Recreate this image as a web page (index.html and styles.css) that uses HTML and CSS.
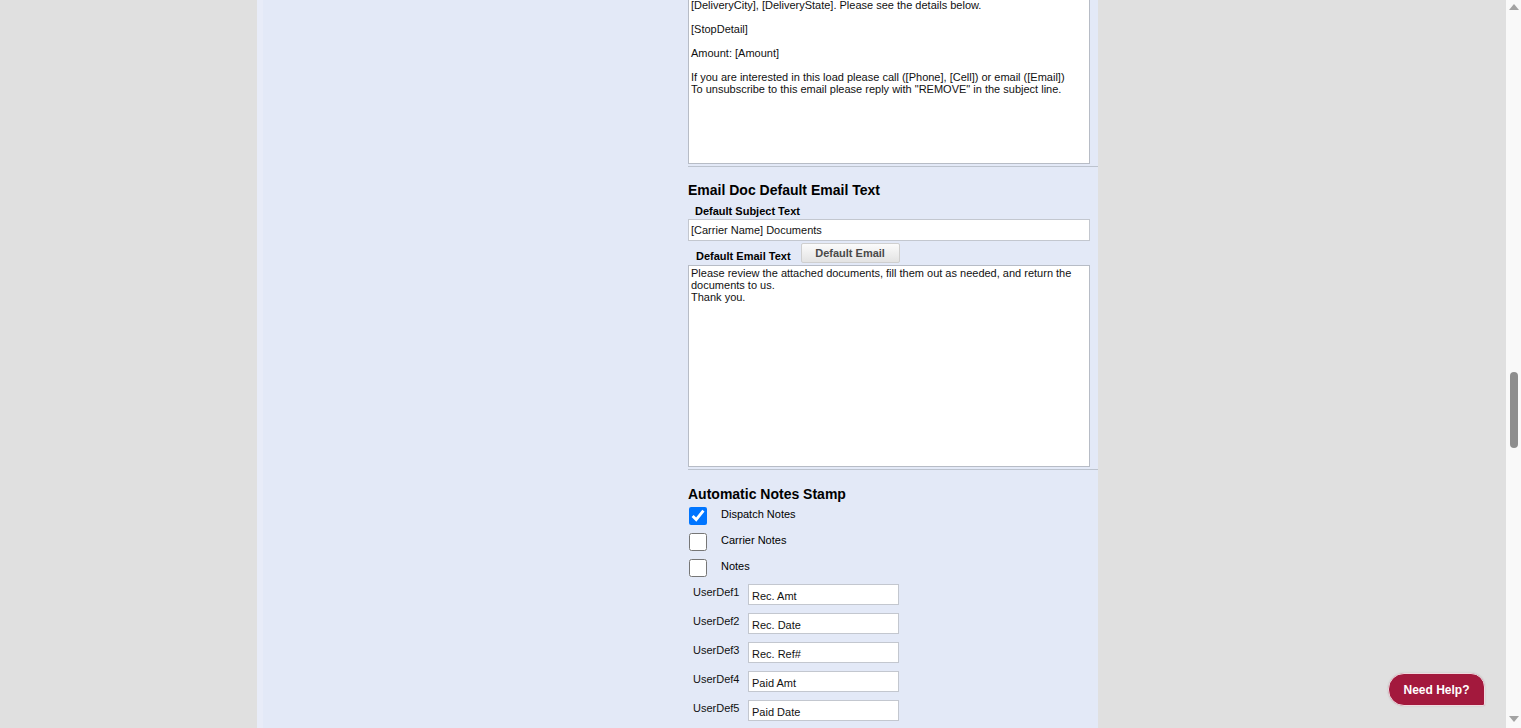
FILE: index.html
```html
<!DOCTYPE html>
<html>
<head>
<meta charset="utf-8">
<link rel="stylesheet" href="styles.css">
</head>
<body>
<div class="window">
  <div class="viewport">
    <div class="panel">
      <div class="content">
        <textarea class="area area-top">[CarrierName] has a load picking up in [PickupCity], [PickupState] delivering to
[DeliveryCity], [DeliveryState]. Please see the details below.

[StopDetail]

Amount: [Amount]

If you are interested in this load please call ([Phone], [Cell]) or email ([Email])
To unsubscribe to this email please reply with "REMOVE" in the subject line.</textarea>
        <div class="divider"></div>

        <h2 class="section-title">Email Doc Default Email Text</h2>
        <div class="field-label">Default Subject Text</div>
        <input class="text-input wide" type="text" value="[Carrier Name] Documents">
        <div class="label-row">
          <span class="field-label inline">Default Email Text</span>
          <button class="btn">Default Email</button>
        </div>
        <textarea class="area area-doc">Please review the attached documents, fill them out as needed, and return the documents to us.
Thank you.</textarea>
        <div class="divider"></div>

        <h2 class="section-title stamp-title">Automatic Notes Stamp</h2>
        <div class="checks">
          <label class="check-row"><input type="checkbox" checked><span>Dispatch Notes</span></label>
          <label class="check-row"><input type="checkbox"><span>Carrier Notes</span></label>
          <label class="check-row"><input type="checkbox"><span>Notes</span></label>
        </div>
        <div class="userdefs">
          <div class="ud-row"><span class="ud-label">UserDef1</span><input class="text-input ud" type="text" value="Rec. Amt"></div>
          <div class="ud-row"><span class="ud-label">UserDef2</span><input class="text-input ud" type="text" value="Rec. Date"></div>
          <div class="ud-row"><span class="ud-label">UserDef3</span><input class="text-input ud" type="text" value="Rec. Ref#"></div>
          <div class="ud-row"><span class="ud-label">UserDef4</span><input class="text-input ud" type="text" value="Paid Amt"></div>
          <div class="ud-row"><span class="ud-label">UserDef5</span><input class="text-input ud" type="text" value="Paid Date"></div>
        </div>
      </div>
    </div>
    <button class="help">Need Help?</button>
  </div>
  <div class="scrollbar">
    <div class="arrow up"></div>
    <div class="track"><div class="thumb"></div></div>
    <div class="arrow down"></div>
  </div>
</div>
</body>
</html>
```
FILE: styles.css
```css
html, body {
  margin: 0;
  padding: 0;
  height: 728px;
  overflow: hidden;
}
body {
  font-family: "Liberation Sans", Arial, sans-serif;
  font-size: 11px;
  color: #000;
}
.window {
  display: flex;
  height: 728px;
}
.viewport {
  flex: 1;
  background: #e0e0e0;
  overflow: hidden;
  position: relative;
}
.panel {
  margin-left: 257px;
  width: 835px;
  height: 728px;
  background: #e3e9f7;
  border-left: 6px solid #e8ecf8;
}
.content {
  margin-left: 425px;
  width: 410px;
  display: flex;
  flex-direction: column;
  align-items: flex-start;
}
.area {
  box-sizing: border-box;
  width: 402px;
  border: 1px solid #b7bcc6;
  background: #fff;
  font-family: "Liberation Sans", Arial, sans-serif;
  font-size: 11px;
  line-height: 12px;
  padding: 2px 2px;
  margin: 0;
  resize: none;
  overflow: hidden;
  color: #111;
  outline: none;
}
.area-top {
  height: 180px;
  margin-top: -16px;
}
.area-doc {
  height: 202px;
  margin-top: 2px;
  padding-top: 1px;
}
.divider {
  align-self: stretch;
  height: 0;
  border-top: 1px solid #bcc3ce;
  margin-top: 2px;
}
.section-title {
  font-size: 14px;
  line-height: 16px;
  font-weight: bold;
  margin: 15px 0 0 0;
}
.stamp-title {
  margin-top: 16px;
}
.field-label {
  font-weight: bold;
  font-size: 11px;
  line-height: 13px;
  padding-left: 7px;
  margin-top: 7px;
}
.field-label.inline {
  padding-left: 8px;
  margin-top: 0;
  padding-bottom: 0;
}
.text-input {
  box-sizing: border-box;
  border: 1px solid #c3c7cf;
  background: #fff;
  font-family: "Liberation Sans", Arial, sans-serif;
  font-size: 11px;
  color: #111;
  margin: 0;
  outline: none;
}
.text-input.wide {
  width: 402px;
  height: 22px;
  padding: 0 2px;
  margin-top: 1px;
}
.label-row {
  display: flex;
  align-items: flex-end;
  margin-top: 2px;
}
.btn {
  margin-left: 10px;
  width: 99px;
  height: 20px;
  border: 1px solid #cfcfcf;
  border-radius: 2px;
  background: linear-gradient(#fbfbfb, #e3e3e3);
  font-family: "Liberation Sans", Arial, sans-serif;
  font-size: 11px;
  font-weight: bold;
  color: #4a4a4a;
  padding: 0;
}
.checks {
  display: flex;
  flex-direction: column;
  gap: 8px;
  margin-top: 5px;
}
.check-row {
  display: flex;
  align-items: flex-start;
  height: 18px;
}
.check-row input {
  width: 18px;
  height: 18px;
  margin: 0 0 0 1px;
}
.check-row span {
  margin-left: 14px;
  line-height: 13px;
  margin-top: 1px;
}
.userdefs {
  display: flex;
  flex-direction: column;
  gap: 8px;
  margin-top: 7px;
}
.ud-row {
  display: flex;
  align-items: flex-start;
}
.ud-label {
  width: 60px;
  padding-left: 5px;
  box-sizing: border-box;
  line-height: 13px;
  margin-top: 2px;
  color: #111;
}
.text-input.ud {
  width: 151px;
  height: 21px;
  padding: 2px 3px 0;
}
.help {
  position: absolute;
  right: 21px;
  bottom: 22px;
  width: 97px;
  height: 33px;
  background: #a3193d;
  color: #fff;
  border: 1px solid #f0d8de;
  border-radius: 16px 14px 2px 16px;
  font-family: "Liberation Sans", Arial, sans-serif;
  font-size: 12px;
  font-weight: bold;
  padding: 0;
  box-shadow: 0 0 2px rgba(0,0,0,0.15);
}
.scrollbar {
  width: 15px;
  background: #f9f9f9;
  display: flex;
  flex-direction: column;
  align-items: center;
}
.arrow {
  width: 0;
  height: 0;
  border-left: 5px solid transparent;
  border-right: 5px solid transparent;
}
.arrow.up {
  border-bottom: 6px solid #a3a3a3;
  margin-top: 4px;
}
.arrow.down {
  border-top: 6px solid #a3a3a3;
  margin-bottom: 6px;
}
.track {
  flex: 1;
  width: 100%;
  display: flex;
  flex-direction: column;
  align-items: center;
}
.thumb {
  width: 8px;
  height: 76px;
  margin-top: 362px;
  border-radius: 4px;
  background: #8e8e8e;
}
```
